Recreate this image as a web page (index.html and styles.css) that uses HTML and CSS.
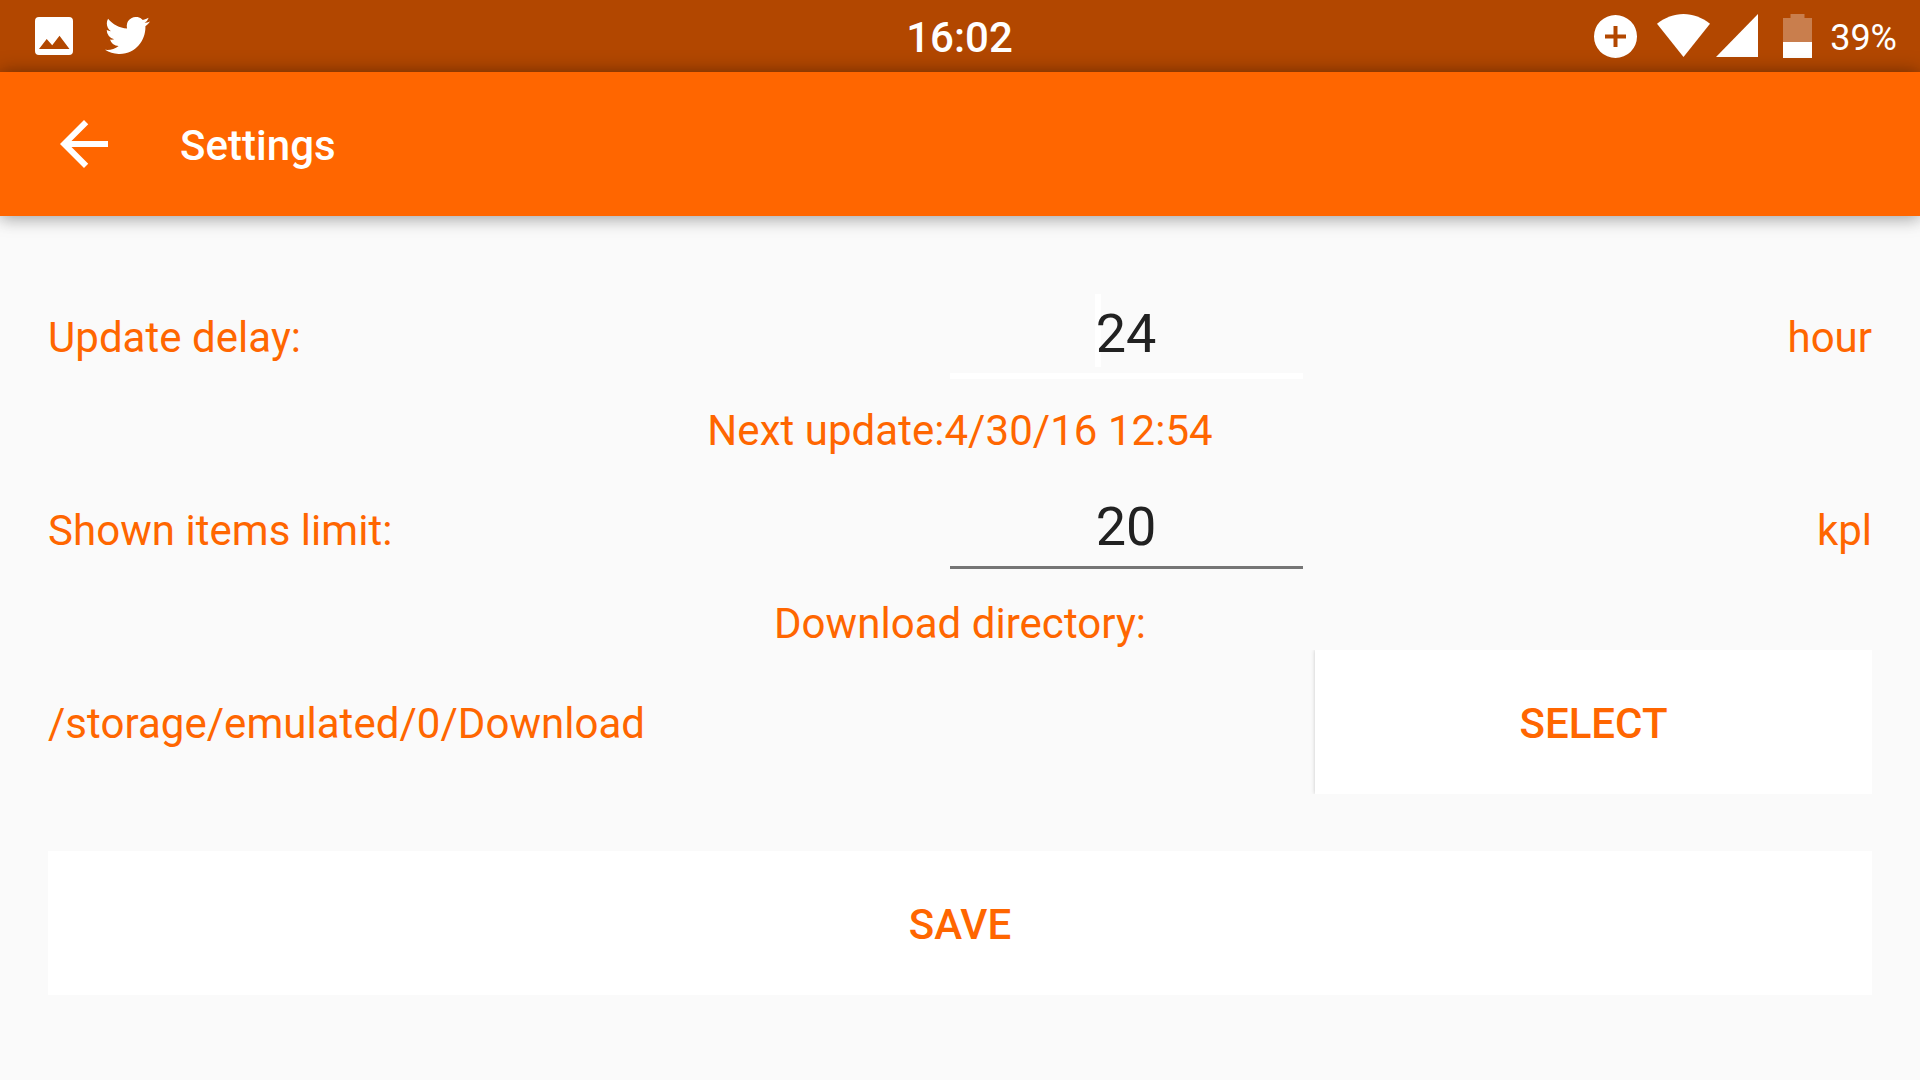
FILE: index.html
```html
<!DOCTYPE html>
<html lang="en">
<head>
<meta charset="utf-8">
<title>Settings</title>
<link rel="stylesheet" href="styles.css">
</head>
<body>
<div class="screen">
  <div class="status-bar">
    <div class="status-group notifications">
      <svg class="icon-image" viewBox="0 0 38 38"><path fill="#fff" fill-rule="evenodd" d="M4 0h30a4 4 0 0 1 4 4v30a4 4 0 0 1-4 4H4a4 4 0 0 1-4-4V4a4 4 0 0 1 4-4zM4 32h30.500L24.500 18.700 17.200 28.300 11.700 22z"/></svg>
      <svg class="icon-bird" viewBox="0 0 24 19.500" preserveAspectRatio="none"><path fill="#fff" transform="translate(0 -2.250)" d="M23.953 4.570a10 10 0 0 1-2.825.775 4.958 4.958 0 0 0 2.163-2.723c-.951.555-2.005.959-3.127 1.184a4.920 4.920 0 0 0-8.384 4.482C7.690 8.095 4.067 6.130 1.640 3.162a4.822 4.822 0 0 0-.666 2.475c0 1.710.870 3.213 2.188 4.096a4.904 4.904 0 0 1-2.228-.616v.060a4.923 4.923 0 0 0 3.946 4.827 4.996 4.996 0 0 1-2.212.085 4.936 4.936 0 0 0 4.604 3.417 9.867 9.867 0 0 1-6.102 2.105c-.390 0-.779-.023-1.170-.067a13.995 13.995 0 0 0 7.557 2.209c9.053 0 13.998-7.496 13.998-13.985 0-.210 0-.420-.015-.630A9.935 9.935 0 0 0 24 4.590z"/></svg>
    </div>
    <div class="clock">16:02</div>
    <div class="status-group indicators">
      <svg class="icon-plus" viewBox="0 0 43 43"><path fill="#fff" fill-rule="evenodd" d="M21.500 0a21.500 21.500 0 1 1 0 43 21.500 21.500 0 0 1 0-43zM19.500 11v8.500H11v4h8.500V32h4v-8.500H32v-4h-8.500V11z"/></svg>
      <svg class="icon-wifi" viewBox="0 0 53 43"><path fill="#fff" d="M26.500 43L0 9.800C8 3.500 17 0 26.500 0S45 3.500 53 9.800z"/></svg>
      <svg class="icon-signal" viewBox="0 0 42 43"><path fill="#fff" d="M42 0v43H0z"/></svg>
      <svg class="icon-battery" viewBox="0 0 29 44"><path fill="#fff" fill-opacity=".3" d="M7.500 0h14v4H29v24H0V4h7.500z"/><path fill="#fff" d="M0 28h29v16H0z"/></svg>
      <span class="battery-level">39%</span>
    </div>
  </div>
  <header class="app-bar">
    <svg class="icon-back" viewBox="0 0 48 48"><path fill="#fff" d="M48 21H11.490L28.260 4.230 24 0 0 24l24 24 4.230-4.230L11.490 27H48z"/></svg>
    <h1 class="title">Settings</h1>
  </header>
  <main class="content">
    <div class="row">
      <label class="label">Update delay:</label>
      <div class="field focused"><span class="value">24</span></div>
      <span class="unit">hour</span>
    </div>
    <p class="caption">Next update:4/30/16 12:54</p>
    <div class="row">
      <label class="label">Shown items limit:</label>
      <div class="field"><span class="value">20</span></div>
      <span class="unit">kpl</span>
    </div>
    <p class="caption">Download directory:</p>
    <div class="directory">
      <span class="path">/storage/emulated/0/Download</span>
      <button class="button select">SELECT</button>
    </div>
    <button class="button save">SAVE</button>
  </main>
</div>
</body>
</html>
```
FILE: styles.css
```css
* {
  box-sizing: border-box;
}

body {
  margin: 0;
  background: #fafafa;
  font-family: Roboto, sans-serif;
  font-size: 42px;
  line-height: 50px;
  color: #ff6600;
}

svg {
  display: block;
  flex: none;
}

.screen {
  width: 1920px;
  height: 1080px;
  overflow: hidden;
}

.status-bar {
  display: grid;
  grid-template-columns: 1fr auto 1fr;
  height: 72px;
  background: #b24700;
  color: #fff;
}

.status-group {
  display: flex;
  align-items: flex-start;
}

.notifications {
  padding: 17px 0 0 35px;
  gap: 32px;
}

.icon-image {
  width: 38px;
  height: 38px;
}

.icon-bird {
  width: 45px;
  height: 37px;
}

.clock {
  padding: 13px 1px 0 0;
  font-weight: 500;
}

.indicators {
  justify-content: flex-end;
  padding: 14px 23px 0 0;
}

.icon-plus {
  width: 43px;
  height: 43px;
  margin: 1px 20px 0 0;
}

.icon-wifi {
  width: 53px;
  height: 43px;
  margin-right: 6px;
}

.icon-signal {
  width: 42px;
  height: 43px;
  margin-right: 25px;
}

.icon-battery {
  width: 29px;
  height: 44px;
  margin-right: 18px;
}

.battery-level {
  font-size: 36px;
  line-height: 48px;
}

.app-bar {
  position: relative;
  display: flex;
  align-items: center;
  height: 144px;
  padding-left: 60px;
  background: #ff6600;
  box-shadow: 0 0 18px rgba(0, 0, 0, 0.36), 0 6px 14px rgba(0, 0, 0, 0.08);
}

.icon-back {
  width: 48px;
  height: 48px;
}

.title {
  margin: 3px 0 0 72px;
  font-size: 42px;
  font-weight: 500;
  letter-spacing: 0.04px;
  color: #fff;
}

.content {
  padding: 86px 48px 0;
}

.label,
.caption,
.path {
  letter-spacing: 0.04px;
}

.row {
  display: grid;
  grid-template-columns: 890px 377px 557px;
  align-items: baseline;
  height: 103px;
}

.field {
  height: 74px;
  margin: 0 12px;
  padding-right: 1px;
  border-bottom: 3px solid #757575;
  font-size: 54px;
  line-height: 64px;
  text-align: center;
  color: #212121;
}

.field.focused {
  height: 77px;
  border-bottom: 6px solid #fff;
}

.value {
  position: relative;
}

.focused .value::before {
  content: "";
  position: absolute;
  z-index: -1;
  left: -1px;
  top: -8px;
  width: 6px;
  height: 73px;
  background: #fff;
}

.unit {
  text-align: right;
}

.caption {
  height: 90px;
  margin: 0;
  padding-top: 1px;
  text-align: center;
}

.directory {
  display: grid;
  grid-template-columns: 1267px 557px;
  align-items: center;
  height: 144px;
  margin-top: -38px;
}

.button {
  display: block;
  height: 144px;
  padding: 3px 0 0;
  border: 0;
  background: #fff;
  font: 500 42px/50px Roboto, sans-serif;
  color: #ff6600;
}

.select {
  box-shadow: 0 0 4px rgba(0, 0, 0, 0.2);
  clip-path: inset(0 0 0 -4px);
}

.path {
  padding-top: 3px;
}

.save {
  width: 100%;
  margin-top: 57px;
}
```
